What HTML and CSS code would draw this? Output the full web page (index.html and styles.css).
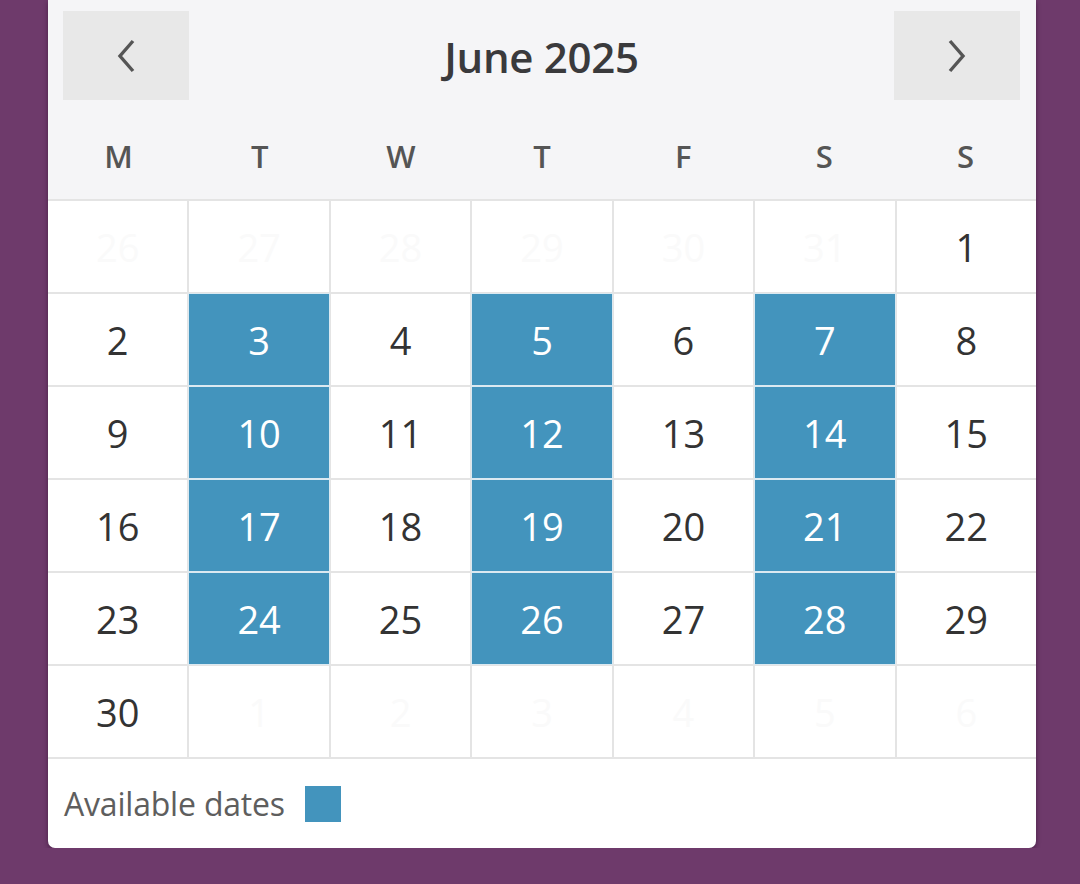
FILE: index.html
```html
<!DOCTYPE html>
<html lang="en">
<head>
<meta charset="utf-8">
<title>June 2025</title>
<link rel="stylesheet" href="styles.css">
</head>
<body>
<div class="card">
  <div class="head">
    <div class="nav">
      <button class="navbtn" aria-label="Previous month">
        <svg width="28" height="36" viewBox="0 0 28 36"><path d="M21 3 L8 18 L21 33" fill="none" stroke="#555" stroke-width="3.4"/></svg>
      </button>
      <div class="title">June 2025</div>
      <button class="navbtn" aria-label="Next month">
        <svg width="28" height="36" viewBox="0 0 28 36"><path d="M7 3 L20 18 L7 33" fill="none" stroke="#555" stroke-width="3.4"/></svg>
      </button>
    </div>
    <div class="weekdays">
      <span>M</span><span>T</span><span>W</span><span>T</span><span>F</span><span>S</span><span>S</span>
    </div>
  </div>
  <div class="grid">
    <div class="cell out">26</div><div class="cell out">27</div><div class="cell out">28</div><div class="cell out">29</div><div class="cell out">30</div><div class="cell out">31</div><div class="cell">1</div>
    <div class="cell">2</div><div class="cell av">3</div><div class="cell">4</div><div class="cell av">5</div><div class="cell">6</div><div class="cell av">7</div><div class="cell">8</div>
    <div class="cell">9</div><div class="cell av">10</div><div class="cell">11</div><div class="cell av">12</div><div class="cell">13</div><div class="cell av">14</div><div class="cell">15</div>
    <div class="cell">16</div><div class="cell av">17</div><div class="cell">18</div><div class="cell av">19</div><div class="cell">20</div><div class="cell av">21</div><div class="cell">22</div>
    <div class="cell">23</div><div class="cell av">24</div><div class="cell">25</div><div class="cell av">26</div><div class="cell">27</div><div class="cell av">28</div><div class="cell">29</div>
    <div class="cell">30</div><div class="cell out">1</div><div class="cell out">2</div><div class="cell out">3</div><div class="cell out">4</div><div class="cell out">5</div><div class="cell out">6</div>
  </div>
  <div class="legend">
    <span class="legend-text">Available dates</span>
    <span class="swatch"></span>
  </div>
</div>
</body>
</html>
```
FILE: styles.css
```css
html, body {
  margin: 0;
  padding: 0;
  background: #6e3a6b;
  font-family: "Open Sans", "Noto Sans", sans-serif;
}
.card {
  margin-left: 48px;
  width: 988px;
  background: #fff;
  border-radius: 0 0 7px 7px;
  box-shadow: 0 2px 5px rgba(30, 0, 30, 0.45);
  overflow: hidden;
}
.head {
  background: #f5f5f7;
  padding-top: 11px;
}
.nav {
  display: flex;
  align-items: center;
  justify-content: space-between;
  padding: 0 16px 0 15px;
}
.navbtn {
  width: 126px;
  height: 89px;
  border: none;
  background: #e8e8e8;
  display: flex;
  align-items: center;
  justify-content: center;
  padding: 0;
}
.title {
  font-size: 42px;
  font-weight: 600;
  color: #3a3a3c;
  letter-spacing: -0.3px;
  margin-top: 2px;
}
.weekdays {
  display: grid;
  grid-template-columns: repeat(7, 1fr);
  height: 99px;
  align-items: center;
  font-size: 31px;
  font-weight: 600;
  color: #555;
  text-align: center;
}
.weekdays span {
  padding-top: 12px;
}
.grid {
  display: grid;
  grid-template-columns: repeat(7, 1fr);
  grid-auto-rows: 91px;
  gap: 2px;
  background: #e4e4e4;
  border-top: 2px solid #e4e4e4;
  border-bottom: 2px solid #e4e4e4;
}
.cell {
  background: #fff;
  display: flex;
  align-items: center;
  justify-content: center;
  font-size: 38px;
  color: #333;
}
.cell.out {
  color: #fafafa;
}
.cell.av {
  background: #4394bd;
  color: #fff;
  box-shadow: 0 0 0 1px #dbe9f1;
}
.legend {
  display: flex;
  align-items: center;
  height: 89px;
  padding-left: 16px;
  gap: 20px;
}
.legend-text {
  font-size: 32px;
  color: #5e5e5e;
  letter-spacing: -0.2px;
}
.swatch {
  width: 36px;
  height: 36px;
  background: #4394bd;
}
```
